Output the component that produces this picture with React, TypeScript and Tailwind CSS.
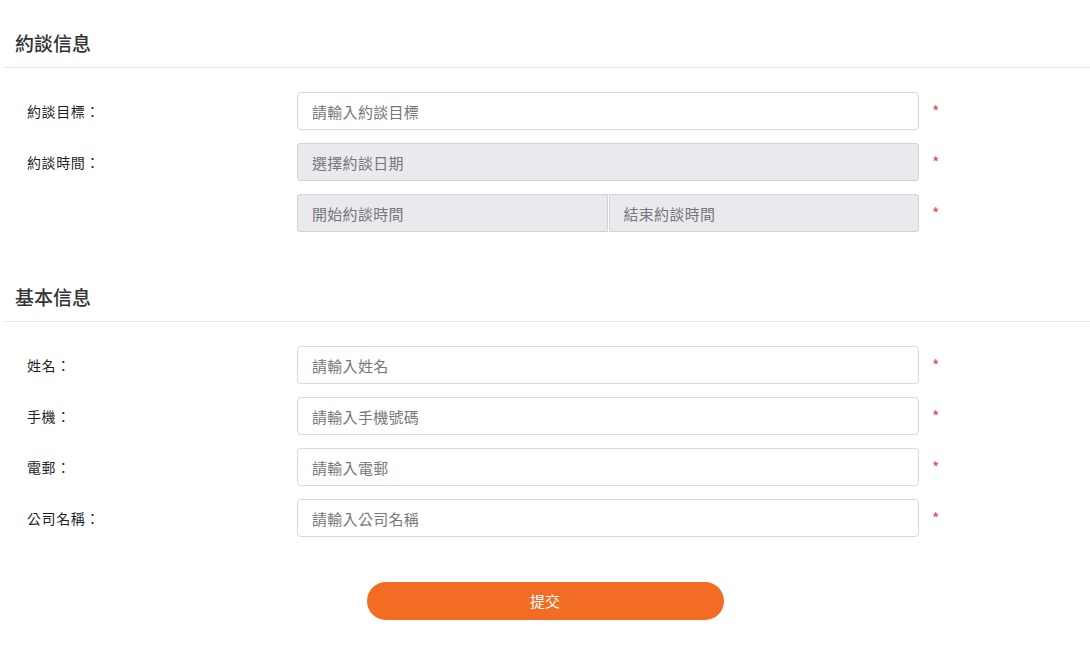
import React from 'react';

// --- Form field definitions ---

interface Field {
    label: string;
    placeholder: string;
}

const basicFields: Field[] = [
    { label: '姓名', placeholder: '請輸入姓名' },
    { label: '手機', placeholder: '請輸入手機號碼' },
    { label: '電郵', placeholder: '請輸入電郵' },
    { label: '公司名稱', placeholder: '請輸入公司名稱' },
];

const fontStack = { fontFamily: '"Noto Sans CJK TC", "Noto Sans", sans-serif' };

const SectionHeader: React.FC<{ title: string }> = ({ title }) => (
    <div className="ml-[3px] h-[50px] flex items-center border-b border-[#e6e6e6] pl-[12px]">
        <h2 className="text-[19px] font-medium text-[#333] leading-none">{title}</h2>
    </div>
);

const Required: React.FC = () => (
    <span className="w-[30px] pl-[13px] text-[16px] text-[#e8474b] leading-none -mt-[1px]">*</span>
);

const Row: React.FC<{ label?: string; children: React.ReactNode }> = ({ label, children }) => (
    <div className="flex items-center h-[38px]">
        <div className="w-[297px] pl-[27px] text-[14px] font-normal text-[#1f1f1f] tracking-[0.6px]">
            {label && `${label}：`}
        </div>
        <div className="w-[622px] h-full flex">{children}</div>
        <Required />
    </div>
);

const TextInput: React.FC<{ placeholder: string }> = ({ placeholder }) => (
    <input
        type="text"
        placeholder={placeholder}
        className="w-full h-full rounded-[4px] border border-[#d9d9d9] bg-white px-[14px] text-[15px] tracking-[0.3px] text-[#333] placeholder:text-[#777] outline-none"
        style={fontStack}
    />
);

const DisabledInput: React.FC<{ placeholder: string; className?: string }> = ({ placeholder, className }) => (
    <input
        type="text"
        disabled
        placeholder={placeholder}
        className={`w-full h-full border border-[#d4d4d4] bg-[#e9eaed] px-[14px] text-[15px] tracking-[0.3px] placeholder:text-[#777] outline-none ${className ?? ''}`}
        style={fontStack}
    />
);

const App: React.FC = () => {
    return (
        <div className="min-h-screen bg-white" style={fontStack}>
            {/* 約談信息 */}
            <section className="pt-[18px]">
                <SectionHeader title="約談信息" />
                <div className="pt-[24px] flex flex-col gap-[13px]">
                    <Row label="約談目標">
                        <TextInput placeholder="請輸入約談目標" />
                    </Row>
                    <Row label="約談時間">
                        <DisabledInput placeholder="選擇約談日期" className="rounded-[3px]" />
                    </Row>
                    <Row>
                        <div className="flex w-full h-full gap-px">
                            <DisabledInput placeholder="開始約談時間" className="rounded-l-[3px]" />
                            <DisabledInput placeholder="結束約談時間" className="rounded-r-[3px]" />
                        </div>
                    </Row>
                </div>
            </section>

            {/* 基本信息 */}
            <section className="pt-[40px]">
                <SectionHeader title="基本信息" />
                <div className="pt-[24px] flex flex-col gap-[13px]">
                    {basicFields.map((f) => (
                        <Row key={f.label} label={f.label}>
                            <TextInput placeholder={f.placeholder} />
                        </Row>
                    ))}
                </div>
            </section>

            <div className="pt-[45px] pb-[29px] flex justify-center">
                <button
                    type="button"
                    className="w-[357px] h-[38px] rounded-full bg-[#f26c24] text-white text-[15px]"
                    style={fontStack}
                >
                    提交
                </button>
            </div>
        </div>
    );
};

export default App;
